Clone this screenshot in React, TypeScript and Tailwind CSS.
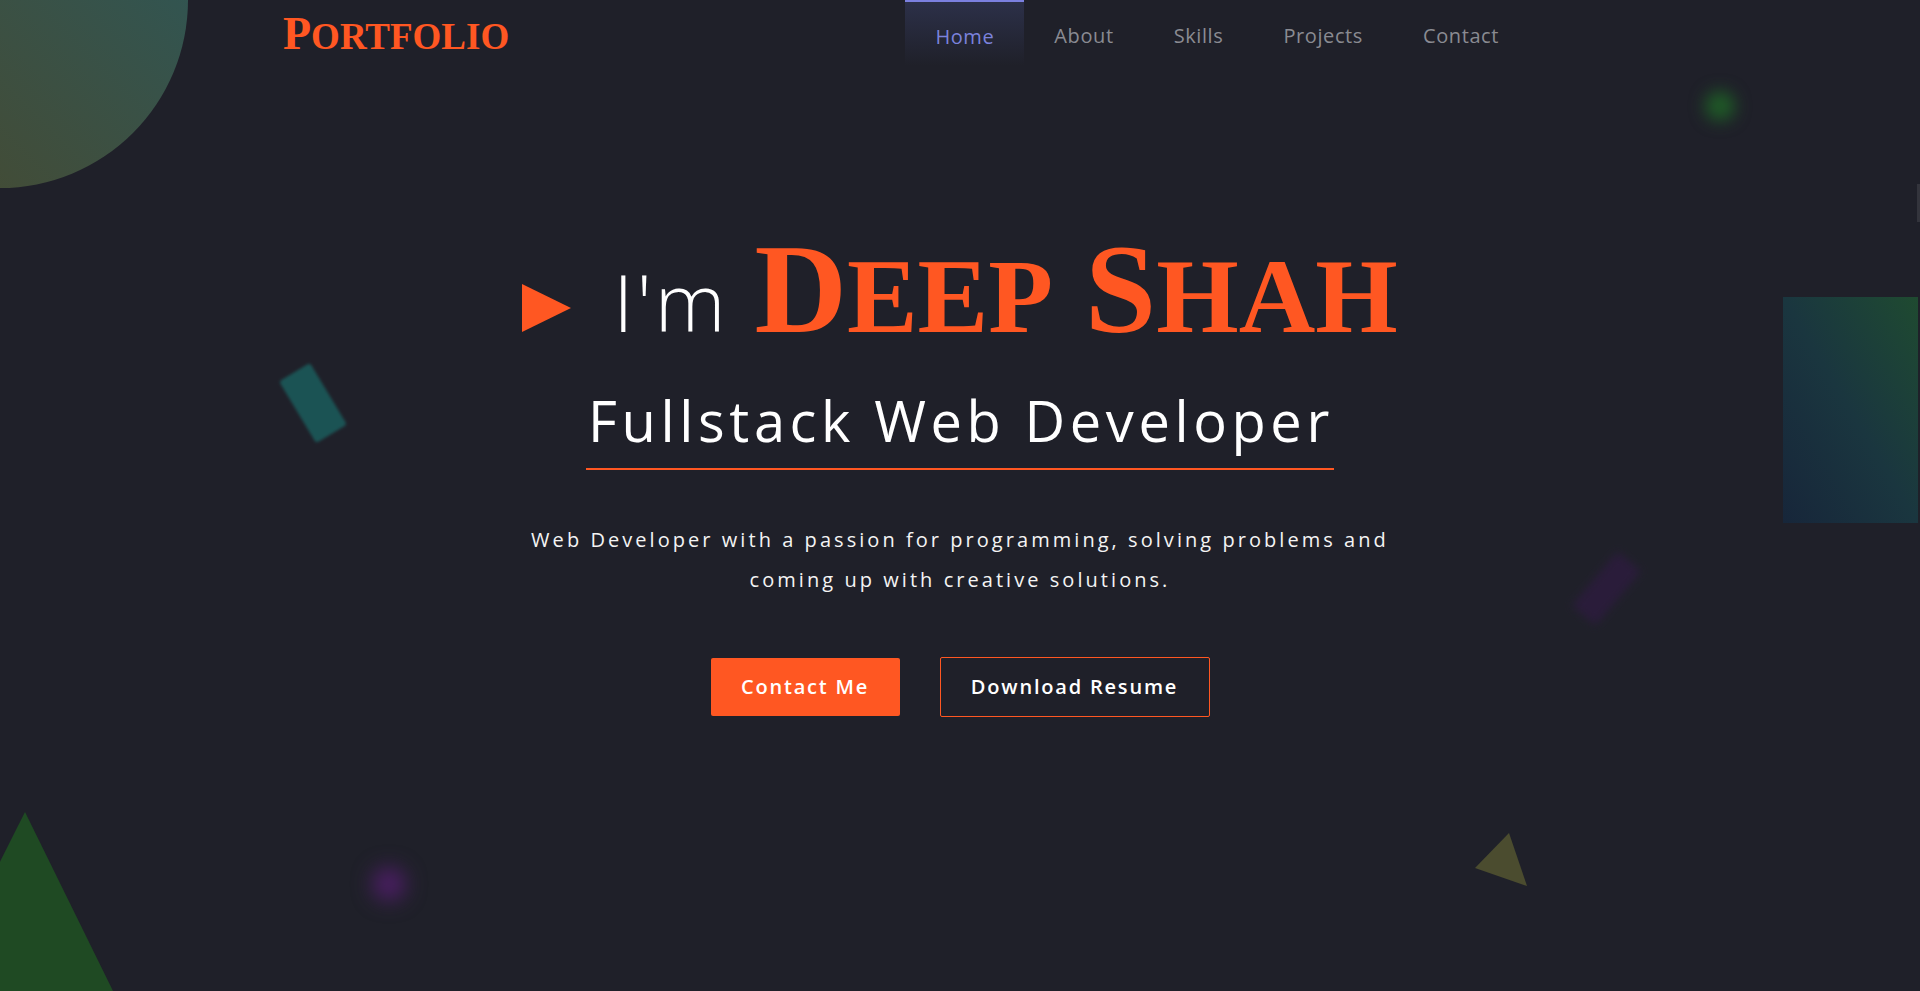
import React from "react";

const links = ["Home", "About", "Skills", "Projects", "Contact"];

const Decorations: React.FC = () => (
  <>
    {/* top-left circle */}
    <div className="absolute -left-[188px] -top-[188px] h-[376px] w-[376px] rounded-full bg-linear-to-tr from-[#48482a] to-[#27585c]" />
    {/* green glow */}
    <div className="absolute left-[1705px] top-[91px] h-[30px] w-[30px] rounded-full bg-[#1f5a27] blur-[8px]" />
    {/* teal bar */}
    <div className="absolute left-[295px] top-[367px] h-[72px] w-[36px] -rotate-[31deg] rounded-[3px] bg-[#1b5354] blur-[1.5px]" />
    {/* right panel */}
    <div className="absolute left-[1783px] top-[297px] h-[226px] w-[135px] bg-linear-to-bl from-[#1f4a30] via-[#1a363f] to-[#17263a]" />
    <div className="absolute right-0 top-[184px] h-[38px] w-[3px] bg-[#33343c]" />
    {/* purple bar */}
    <div className="absolute left-[1591px] top-[553px] h-[71px] w-[31px] rotate-[40deg] rounded-[4px] bg-[#2a1c3a] blur-[4px]" />
    {/* purple glow */}
    <div className="absolute left-[372px] top-[867px] h-[34px] w-[34px] rounded-full bg-[#4a1e62] blur-[10px]" />
    {/* green triangle */}
    <svg className="absolute left-0 top-[800px]" width="130" height="191" viewBox="0 0 130 191">
      <polygon points="25,12 -65,191 113,191" fill="#1f4a23" />
    </svg>
    {/* olive triangle */}
    <svg className="absolute left-[1470px] top-[828px]" width="62" height="62" viewBox="0 0 62 62">
      <polygon points="39,5 5,40 57,58" fill="#4b4c2f" />
    </svg>
  </>
);

const App: React.FC = () => {
  return (
    <div className="relative min-h-[991px] w-full overflow-hidden bg-[#1f2029] font-['Open_Sans',sans-serif]">
      <Decorations />

      <header className="relative z-10 mx-auto flex w-[1354px] items-start justify-between">
        <a className="mt-[11px] font-['Liberation_Serif',serif] text-[46px] font-bold leading-none text-[#ff5722]">
          P<span className="text-[37px]">ORTFOLIO</span>
        </a>
        <nav className="mr-[108px] flex">
          {links.map((l, i) =>
            i === 0 ? (
              <a
                key={l}
                className="h-[66px] border-t-2 border-[#7b80e0] bg-linear-to-b from-[#2c3049] to-[#1f2029] px-[30px] pt-[22px] text-[20px] leading-[26px] tracking-[0.6px] text-[#7b82dd]"
              >
                {l}
              </a>
            ) : (
              <a
                key={l}
                className="h-[66px] px-[30px] pt-[23px] text-[20px] leading-[26px] tracking-[0.6px] text-[#8a8b92]"
              >
                {l}
              </a>
            )
          )}
        </nav>
      </header>

      <main className="relative z-10 flex flex-col items-center pt-[159px]">
        <h1 className="flex items-baseline leading-none">
          <span className="mb-[2px] mr-[42px] h-0 w-0 border-y-[24px] border-l-[49px] border-y-transparent border-l-[#ff5722]" />
          <span className="mr-[26px] text-[80px] font-light tracking-[3px] text-white">I'm</span>
          <span className="font-['Liberation_Serif',serif] text-[128px] font-bold text-[#ff5722]">
            D<span className="text-[106px]">EEP</span> S<span className="text-[106px]">HAH</span>
          </span>
        </h1>

        <h2 className="mt-[39px] border-b-2 border-[#ff5722] pb-[20px] pl-[2px] text-[56px] leading-none tracking-[4.6px] text-white">
          Fullstack Web Developer
        </h2>

        <p className="mt-[50px] w-[900px] text-center text-[20px] font-medium leading-[40px] tracking-[3.05px] text-[#f4f4f4]">
          Web Developer with a passion for programming, solving problems and coming up with creative solutions.
        </p>

        <div className="mt-[57px] flex items-center gap-[40px]">
          <button className="h-[58px] w-[189px] rounded-[2px] bg-[#ff5722] text-[20px] font-semibold tracking-[1.8px] text-white">
            Contact Me
          </button>
          <button className="h-[60px] w-[270px] rounded-[2px] border border-[#ff5722] text-[20px] font-semibold tracking-[1.8px] text-white">
            Download Resume
          </button>
        </div>
      </main>
    </div>
  );
};

export default App;
